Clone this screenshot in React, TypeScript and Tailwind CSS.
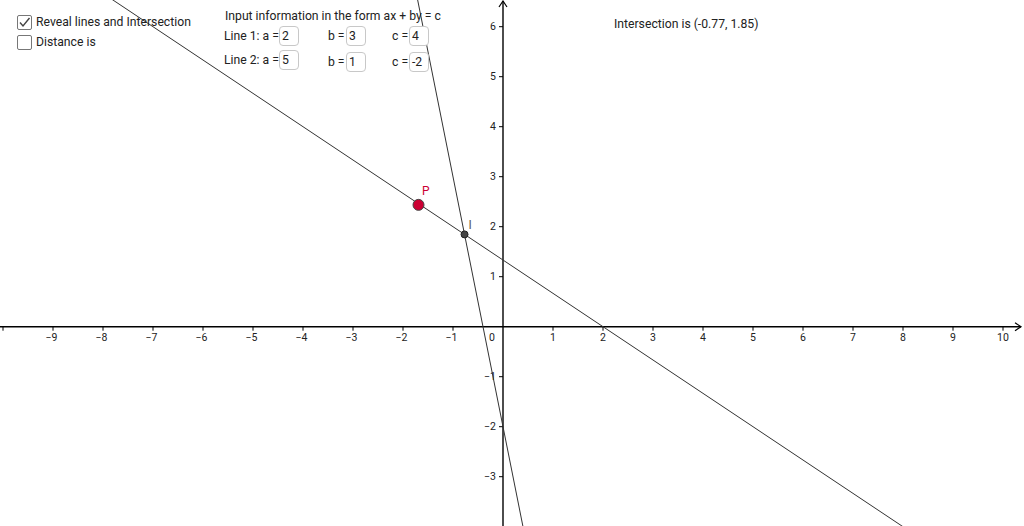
import React from "react";

const OX = 503;
const OY = 326.7;
const U = 50;
const px = (x: number) => OX + x * U;
const py = (y: number) => OY - y * U;

function Graph() {
  const xs = Array.from({ length: 21 }, (_, i) => i - 10).filter((k) => k !== 0);
  const ys = Array.from({ length: 10 }, (_, i) => i - 3).filter((k) => k !== 0);
  const l1 = (x: number) => (4 - 2 * x) / 3;
  const l2x = (y: number) => (-2 - y) / 5;
  const ix = -10 / 13;
  const iy = 24 / 13;
  const pX = -1.7;
  return (
    <svg
      className="absolute inset-0"
      width={1024}
      height={526}
      viewBox="0 0 1024 526"
      style={{ fontFamily: "Roboto, 'Liberation Sans', sans-serif" }}
    >
      <line x1={0} y1={OY} x2={1021} y2={OY} stroke="#000" strokeWidth={1.4} />
      <path d="M1015 322.7 L1021 326.7 L1015 330.7" fill="none" stroke="#000" strokeWidth={1.2} />
      <line x1={OX} y1={1} x2={OX} y2={526} stroke="#000" strokeWidth={1.4} />
      <path d="M499 7 L503 1 L507 7" fill="none" stroke="#000" strokeWidth={1.2} />
      {xs.map((k) => (
        <g key={"x" + k}>
          <line x1={px(k)} y1={OY} x2={px(k)} y2={OY + 4} stroke="#000" strokeWidth={1} />
          {k > -10 && (
            <text
              x={px(k) + (k < 0 ? -1.5 : 0)}
              y={OY + 14}
              fontSize={10.5}
              textAnchor="middle"
              fill="#222"
            >
              {k < 0 ? "\u2212" + -k : String(k)}
            </text>
          )}
        </g>
      ))}
      <text x={492} y={OY + 14} fontSize={10.5} textAnchor="middle" fill="#222">
        0
      </text>
      {ys.map((k) => (
        <g key={"y" + k}>
          <line x1={OX - 4} y1={py(k)} x2={OX} y2={py(k)} stroke="#000" strokeWidth={1} />
          <text x={496} y={py(k) + 3.5} fontSize={10.5} textAnchor="end" fill="#222">
            {k < 0 ? "\u2212" + -k : String(k)}
          </text>
        </g>
      ))}
      <line x1={px(-8.5)} y1={py(l1(-8.5))} x2={px(8.5)} y2={py(l1(8.5))} stroke="#333" strokeWidth={1} />
      <line x1={px(l2x(7))} y1={py(7)} x2={px(l2x(-4.5))} y2={py(-4.5)} stroke="#333" strokeWidth={1} />
      <circle cx={px(ix)} cy={py(iy)} r={3.5} fill="#444" stroke="#222" strokeWidth={1} />
      <text x={px(ix) + 4} y={py(iy) - 5} fontSize={12} fill="#555">
        I
      </text>
      <circle cx={px(pX) + 0.5} cy={py(l1(pX)) + 1.5} r={5.5} fill="#cc0033" stroke="#444" strokeWidth={1} />
      <text x={px(pX) + 4} y={py(l1(pX)) - 8} fontSize={12} fill="#cc0033">
        P
      </text>
    </svg>
  );
}

function Field({ label, v, labelW, w, className = "" }: { label: string; v: string; labelW: string; w: string; className?: string }) {
  return (
    <div className={"flex items-center " + w + " " + className}>
      <span className={labelW}>{label}</span>
      <span className="w-[20px] h-[20px] rounded-[4px] border border-[#c8c8c8] bg-white pl-[2px] leading-[18px]">
        {v}
      </span>
    </div>
  );
}

function Check({ checked, label }: { checked: boolean; label: string }) {
  return (
    <label className="flex items-center gap-[4px] h-[15px]">
      <span className="w-[15px] h-[15px] border border-[#777] rounded-[2px] bg-white flex items-center justify-center">
        {checked && (
          <svg width="13" height="13" viewBox="0 0 13 13">
            <path d="M2 6.5 L5 10 L11.5 2" fill="none" stroke="#444" strokeWidth={1.4} />
          </svg>
        )}
      </span>
      <span>{label}</span>
    </label>
  );
}

export default function App() {
  return (
    <div
      className="relative w-[1024px] h-[526px] overflow-hidden bg-white text-[#222] text-[12.2px]"
      style={{ fontFamily: "Roboto, 'Liberation Sans', sans-serif" }}
    >
      <Graph />
      <div className="absolute left-[17px] top-[15px] flex flex-col gap-[5px]">
        <Check checked label="Reveal lines and Intersection" />
        <Check checked={false} label="Distance is" />
      </div>
      <div className="absolute left-[224px] top-[7px] flex flex-col">
        <div className="pl-[1px] h-[19px]">Input information in the form ax + by = c</div>
        <div className="flex items-start">
          <Field label="Line 1: a =" v="2" labelW="w-[55px]" w="w-[104px]" />
          <Field label="b =" v="3" labelW="w-[18px]" w="w-[64px]" />
          <Field label="c =" v="4" labelW="w-[17px]" w="w-[40px]" />
        </div>
        <div className="flex items-start mt-[4px]">
          <Field label="Line 2: a =" v="5" labelW="w-[55px]" w="w-[104px]" />
          <Field label="b =" v="1" labelW="w-[18px]" w="w-[64px]" className="mt-[2px]" />
          <Field label="c =" v="-2" labelW="w-[17px]" w="w-[40px]" className="mt-[2px]" />
        </div>
      </div>
      <div className="absolute left-[614px] top-[15px]">Intersection is (-0.77, 1.85)</div>
    </div>
  );
}
